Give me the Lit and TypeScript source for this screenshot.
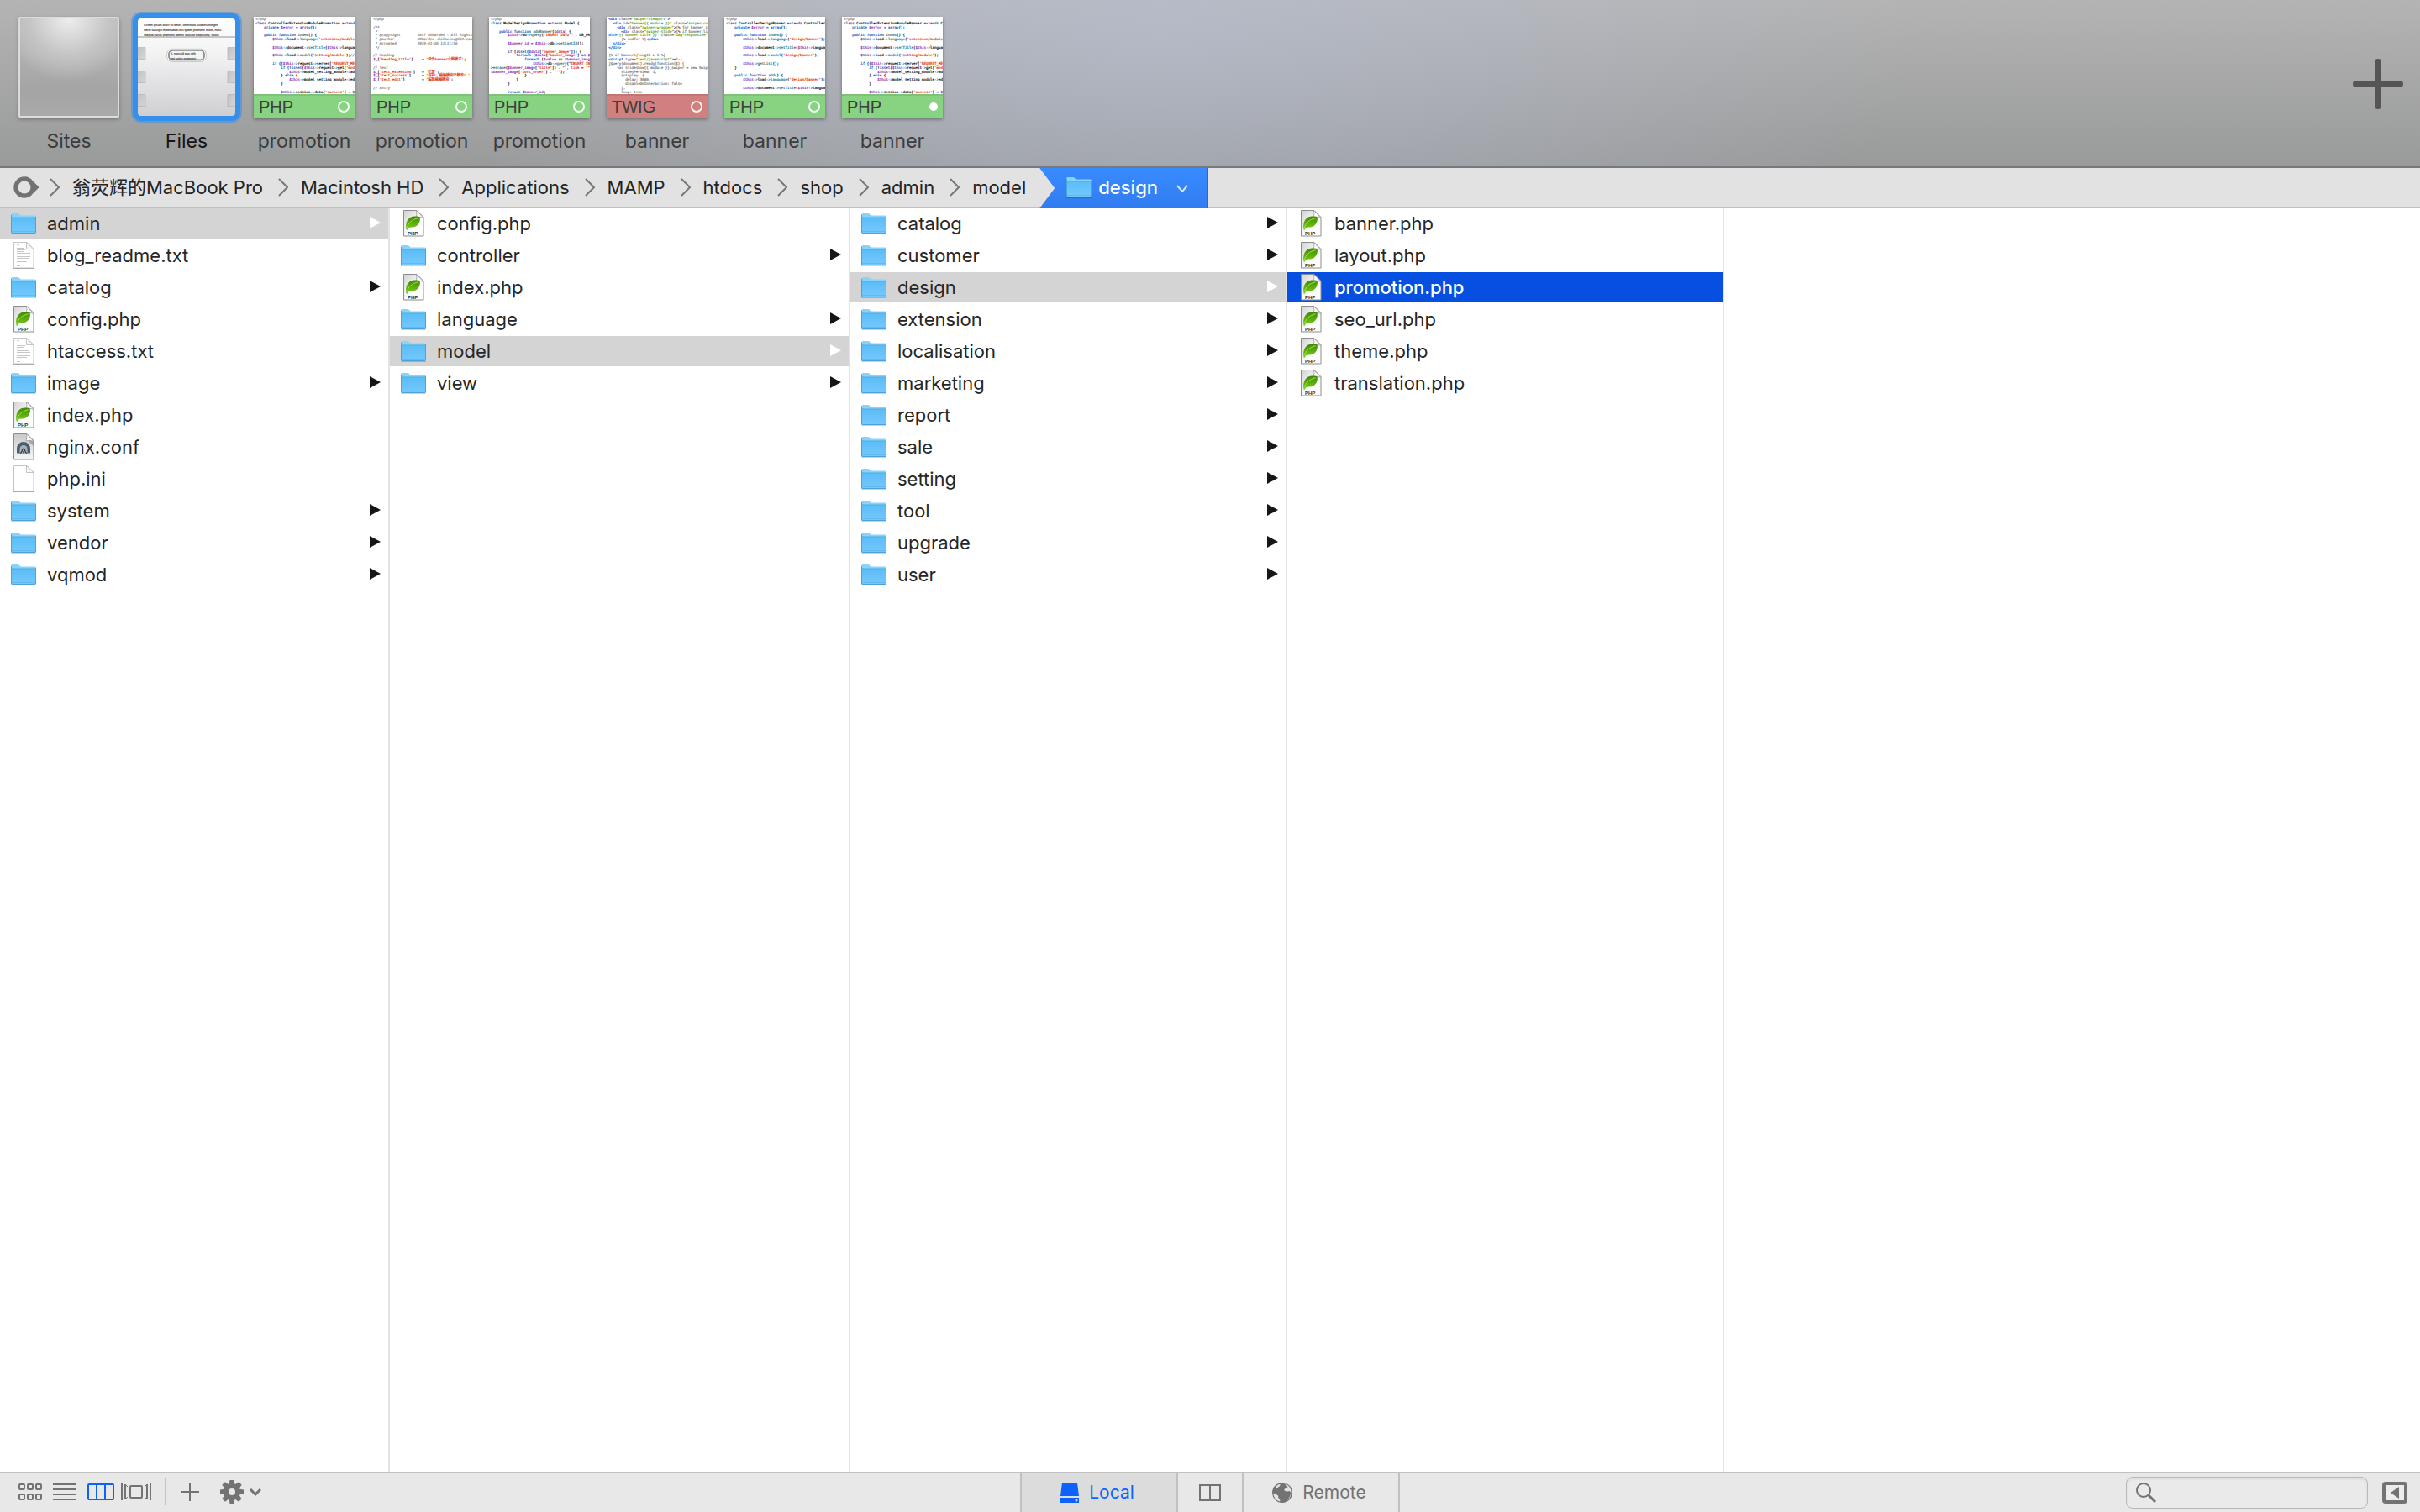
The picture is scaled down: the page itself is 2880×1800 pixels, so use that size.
import { LitElement, html, svg, css, nothing } from "lit";
import { customElement, property, state } from "lit/decorators.js";
import { classMap } from "lit/directives/class-map.js";

type Kind = "folder" | "php" | "txt" | "conf" | "blank";
interface Entry { name: string; kind: Kind; }
interface Pane { entries: Entry[]; open?: string; selected?: string; }
interface DocTab { title: string; lang: string; code: string; saved: boolean; }

const kindOf = (name: string): Kind =>
  name.endsWith(".php") ? "php"
  : name.endsWith(".txt") ? "txt"
  : name.endsWith(".conf") ? "conf"
  : name.endsWith(".ini") ? "blank"
  : "folder";

const list = (names: string): Entry[] =>
  names.split(" ").map((name) => ({ name, kind: kindOf(name) }));

const PANES: Pane[] = [
  { entries: list("admin blog_readme.txt catalog config.php htaccess.txt image index.php nginx.conf php.ini system vendor vqmod"), open: "admin" },
  { entries: list("config.php controller index.php language model view"), open: "model" },
  { entries: list("catalog customer design extension localisation marketing report sale setting tool upgrade user"), open: "design" },
  { entries: list("banner.php layout.php promotion.php seo_url.php theme.php translation.php"), selected: "promotion.php" },
];

const CRUMBS = ["翁荧辉的MacBook Pro", "Macintosh HD", "Applications", "MAMP", "htdocs", "shop", "admin", "model"];

const TABS: DocTab[] = [
  {
    title: "promotion", lang: "PHP", saved: false,
    code: `<?php
class ControllerExtensionModulePromotion extends
    private $error = array();

    public function index() {
        $this->load->language('extension/module/

        $this->document->setTitle($this->languag

        $this->load->model('setting/module');//t

        if (($this->request->server['REQUEST_MET
            if (!isset($this->request->get['modu
                $this->model_setting_module->add
            } else {
                $this->model_setting_module->edi
            }

            $this->session->data['success'] = $t`,
  },
  {
    title: "promotion", lang: "PHP", saved: false,
    code: `<?php

/**
 *
 * @copyright        2017 UXGarden - All Rights
 * @author           UXGarden <lolozine@163.com
 * @created          2019-01-26 11:11:56
 */

// Heading
$_['heading_title']    = '组合banner六图模式';

// Text
$_['text_extension']   = '扩展';
$_['text_success']     = '成功: 横幅模块已修改! ';
$_['text_edit']        = '编辑横幅模块';

// Entry`,
  },
  {
    title: "promotion", lang: "PHP", saved: false,
    code: `<?php
class ModelDesignPromotion extends Model {

    public function addBanner($data) {
        $this->db->query("INSERT INTO " . DB_PRE

        $banner_id = $this->db->getLastId();

        if (isset($data['banner_image'])) {
            foreach ($data['banner_image'] as $l
                foreach ($value as $banner_image
                    $this->db->query("INSERT INT
>escape($banner_image['title']) . "', link = '"
$banner_image['sort_order'] . "'");
                }
            }
        }

        return $banner_id;`,
  },
  {
    title: "banner", lang: "TWIG", saved: false,
    code: `<div class="swiper-viewport">
  <div id="banner{{ module }}" class="swiper-co
    <div class="swiper-wrapper">{% for banner i
      <div class="swiper-slide">{% if banner.li
alt="{{ banner.title }}" class="img-responsive"
      {% endfor %}</div>
  </div>
</div>

{% if banners|length > 1 %}
<script type="text/javascript"><!--
jQuery(document).ready(function($) {
    var slideshow{{ module }}_swiper = new Swip
      slidesPerView: 1,
      autoplay: {
        delay: 3000,
        disableOnInteraction: false
      },
      loop: true`,
  },
  {
    title: "banner", lang: "PHP", saved: false,
    code: `<?php
class ControllerDesignBanner extends Controller
    private $error = array();

    public function index() {
        $this->load->language('design/banner');

        $this->document->setTitle($this->languag

        $this->load->model('design/banner');

        $this->getList();
    }

    public function add() {
        $this->load->language('design/banner');

        $this->document->setTitle($this->languag`,
  },
  {
    title: "banner", lang: "PHP", saved: true,
    code: `<?php
class ControllerExtensionModuleBanner extends Co
    private $error = array();

    public function index() {
        $this->load->language('extension/module/

        $this->document->setTitle($this->languag

        $this->load->model('setting/module');

        if (($this->request->server['REQUEST_MET
            if (!isset($this->request->get['modu
                $this->model_setting_module->add
            } else {
                $this->model_setting_module->edi
            }

            $this->session->data['success'] = $t`,
  },
];

/* Each capture group of a pattern names the class its matches are drawn with. */
const PHP_RULES = /(<\?php|^\/\*.*|^ \*.*|\/\/.*)|('[^']*'?|"[^"]*"?)|(\$\w+)|(->|=)|\b(class|private|public|function|extends|array|isset|if|else|foreach|as|return)\b|((?:language|setTitle|model|getList|index|add|addBanner|query|getLastId|escape)(?=\())/g;
const PHP_NAMES = ["cm", "st", "va", "op", "kw", "fn"];
const TWIG_RULES = /(".*?(?:"|$))|(<\/?\w+|>)|(class=|id=|type=|alt=)|([^<">]+)/g;
const TWIG_NAMES = ["gr", "kw", "op", "mu"];

function highlight(line: string, lang: string) {
  const rules = lang === "PHP" ? PHP_RULES : TWIG_RULES;
  const names = lang === "PHP" ? PHP_NAMES : TWIG_NAMES;
  const parts: unknown[] = [];
  let at = 0;
  for (const m of line.matchAll(rules)) {
    if (m.index! > at) parts.push(svg`<tspan>${line.slice(at, m.index)}</tspan>`);
    const group = m.slice(1).findIndex((g) => g !== undefined);
    parts.push(svg`<tspan class=${names[group]}>${m[0]}</tspan>`);
    at = m.index! + m[0].length;
  }
  if (at < line.length) parts.push(svg`<tspan>${line.slice(at)}</tspan>`);
  return parts;
}

const folderIcon = html`<svg class="icon" viewBox="0 0 30 36" aria-hidden="true">
  <defs><linearGradient id="fb" x1="0" y1="0" x2="0" y2="1"><stop offset="0" stop-color="#5dbcf5"/><stop offset="1" stop-color="#72caff"/></linearGradient></defs>
  <path d="M0 30.500h30" stroke="#000" stroke-opacity=".18" stroke-width="1"/>
  <path d="M0 8q0-2 2-2h6q1 0 1.800.8l1.200 1.200q.8.600 1.800.600H28.500q1.500 0 1.500 1.500V28q0 2-1.500 2h-27Q0 30 0 28z" fill="#86d4fb"/>
  <path d="M0 11h30v17q0 2-1.500 2h-27Q0 30 0 28z" fill="url(#fb)"/>
  <path d="M0 11h30" stroke="#52abe0" stroke-width="1"/>
  <path d="M.5 8v20q0 1.500 1.500 1.500h26q1.500 0 1.500-1.500V10" fill="none" stroke="#4aa2d8" stroke-width="1"/>
  <path d="M1 27.500h28" stroke="#5fb4e8" stroke-width="1" opacity=".7"/>
</svg>`;

const pageShape = "M3.500 2.500h15.500l8 8V33H3.500z";
const fold = svg`<path d="M18.500 2.500q1 5-.5 8.500 4-1.500 8.800.2z" fill="#fff" stroke="#999" stroke-width=".8"/>`;

const phpIcon = html`<svg class="icon" viewBox="0 0 30 36" aria-hidden="true">
  <defs>
    <linearGradient id="pg" x1="0" y1="0" x2="1" y2="1"><stop offset="0" stop-color="#d2d2d2"/><stop offset=".55" stop-color="#fbfbfb"/><stop offset="1" stop-color="#fff"/></linearGradient>
    <linearGradient id="lf" x1="0" y1="0" x2="0" y2="1"><stop offset="0" stop-color="#3f8a06"/><stop offset=".5" stop-color="#5cab10"/><stop offset="1" stop-color="#7fd01c"/></linearGradient>
  </defs>
  <path d=${pageShape} fill="url(#pg)" stroke="#8d8d8d"/>
  ${fold}
  <path d="M6.500 25.500C5 18 8 10 16 9.600c3 0 5-.4 6.600.6 1 5-1 10.500-7 12-3 .6-5-.2-6.800 1.200-.6.600-.6 1.500-.8 2.400z" fill="url(#lf)"/>
  <path d="M7.500 23C9 17.500 13 13.500 20.500 11.800" fill="none" stroke="#a2e83c" stroke-width="1"/>
  <text class="mark" x="8" y="32">PHP</text>
</svg>`;

const txtIcon = html`<svg class="icon" viewBox="0 0 30 36" aria-hidden="true">
  <path d=${pageShape} fill="#fff" stroke="#c4c4c4"/>
  <path d="M3 33.500h24" stroke="#aaa" stroke-width="1"/>
  <path d="M18.500 2.500v8h8.500z" fill="#f4f4f4" stroke="#bbb" stroke-width=".8"/>
  <path d="M7 5.500h3M7 9.500h9M7 11.500h10M7 13.500h8M7 15.500h16M7 17.500h15M7 19.500h16M7 21.500h14M7 23.500h16M7 25.500h12M7 30.500h4" stroke="#c6c6c6" stroke-width="1"/>
</svg>`;

const blankIcon = html`<svg class="icon" viewBox="0 0 30 36" aria-hidden="true">
  <path d=${pageShape} fill="#fff" stroke="#c4c4c4"/>
  <path d="M3 33.500h24" stroke="#aaa" stroke-width="1"/>
  <path d="M18.500 2.500v8h8.500z" fill="#f8f8f8" stroke="#b5b5b5" stroke-width=".8"/>
</svg>`;

const confIcon = html`<svg class="icon" viewBox="0 0 30 36" aria-hidden="true">
  <defs><linearGradient id="cg" x1="0" y1="0" x2="0" y2="1"><stop offset="0" stop-color="#c9c9c9"/><stop offset="1" stop-color="#f6f6f6"/></linearGradient></defs>
  <path d=${pageShape} fill="url(#cg)" stroke="#8d8d8d"/>
  <path d="M27 11v6l-8-7z" fill="#777" opacity=".5"/>
  ${fold}
  <path d="M7 25.500V20a8 8 0 0 1 16 0v5.500z" fill="#4c5c6e"/>
  <path d="M10.500 25.500V20.500a4.500 4.500 0 0 1 9 0v5z" fill="#a9b0b8"/>
  <path d="M11 25.500q2-.5 2.500-4 .5-1.500 1.500-1.500t1.500 1.500q.5 3.500 2.500 4M15 25.500v-2.500" fill="none" stroke="#2d3a48" stroke-width="1.200"/>
</svg>`;

const ICONS = { folder: folderIcon, php: phpIcon, txt: txtIcon, blank: blankIcon, conf: confIcon };

const base = css`
  :host, *, *::before, *::after { box-sizing: border-box; }
  button, input { font: inherit; color: inherit; margin: 0; padding: 0; border: 0; background: none; text-align: inherit; }
  button { cursor: default; }
  svg { display: block; flex: none; }
`;

@customElement("doc-thumb")
export class DocThumb extends LitElement {
  @property({ attribute: false }) doc!: DocTab;

  static styles = [base, css`
    :host { display: flex; flex-direction: column; height: 120px; background: #fff; box-shadow: 0 2px 4px rgba(0, 0, 0, .4); }
    .code { width: 120px; height: 92px; }
    text { font: 13px "DejaVu Sans Mono", "Noto Sans CJK SC", monospace; white-space: pre; }
    text, tspan { fill: currentColor; stroke: currentColor; stroke-width: .6px; color: #111; }
    .cm { color: #888; font-style: italic; }
    .st { color: #e0330c; }
    .va { color: #8a2fb0; }
    .op { color: #1483ea; }
    .kw { color: #1650b8; }
    .fn { color: #38737c; }
    .gr { color: #6ca01a; }
    .mu { color: #777; }
    .bar { display: flex; align-items: center; justify-content: space-between; height: 28px; padding: 0 6px; border-top: 2px solid #7ec277; background: #88d382; color: #3c403c; font: 20px/26px "Liberation Sans", Arial, sans-serif; }
    .twig { border-color: #c47474; background: #d27f7f; }
    .dot { width: 14px; height: 14px; }
  `];

  render() {
    const { code, lang, saved } = this.doc;
    return html`
      <svg class="code" viewBox="0 0 374 287" aria-hidden="true">
        ${code.split("\n").map((line, i) => svg`<text x="7" y=${13 + i * 15}>${highlight(line, lang)}</text>`)}
      </svg>
      <div class=${classMap({ bar: true, twig: lang === "TWIG" })}>
        <span>${lang}</span>
        <svg class="dot" viewBox="0 0 14 14" aria-hidden="true">
          ${saved
            ? svg`<circle cx="9" cy="7" r="5" fill="#fff"/>`
            : svg`<circle cx="7" cy="7" r="6" fill="none" stroke="#fff" stroke-opacity=".9" stroke-width="2"/>`}
        </svg>
      </div>`;
  }
}

@customElement("tab-strip")
export class TabStrip extends LitElement {
  static styles = [base, css`
    :host {
      display: flex; justify-content: space-between; align-items: flex-start;
      height: 200px; padding: 20px 20px 0 12px; border-bottom: 2px solid #77787b;
      background:
        radial-gradient(ellipse 900px 420px at 1380px 40px, rgba(185, 195, 220, .5), rgba(185, 195, 220, 0)),
        linear-gradient(#b4b4b4, #999a9a);
    }
    .tabs { display: flex; }
    .tab { display: flex; flex-direction: column; gap: 14px; width: 140px; padding: 0 10px; text-align: center; font-size: 23px; line-height: 28px; color: #3c3c3d; }
    .active { color: #161616; }
    .sites { height: 120px; border: 2px solid #dcdcdc; border-radius: 2px; background: radial-gradient(ellipse 80px 74px at 50% 0, #eee, #c4c4c4 60%, rgba(190, 190, 190, 0)), linear-gradient(#bbb, #a4a4a4 75%, #aaa); box-shadow: 0 2px 4px rgba(0, 0, 0, .3); }
    .files { height: 128px; margin: -4px; border: 6px solid #368fea; border-radius: 10px; background: #368fea; box-shadow: 0 0 0 2px rgba(70, 145, 230, .6); }
    .files svg { width: 116px; height: 116px; border-radius: 4px; }
    .files text { font: 11px "Liberation Sans", sans-serif; fill: #444; stroke: #444; stroke-width: .4px; }
    .add { width: 60px; height: 60px; margin-top: 50px; }
  `];

  private filesThumb() {
    return html`<svg viewBox="0 0 348 348" aria-hidden="true">
      <defs>
        <linearGradient id="fg" x1="0" y1="0" x2="0" y2="1"><stop offset="0" stop-color="#fff"/><stop offset=".35" stop-color="#f3f3f4"/><stop offset="1" stop-color="#cfcfd2"/></linearGradient>
        <linearGradient id="ng" x1="0" y1="0" x2="1" y2="1"><stop offset="0" stop-color="#c2c2c4"/><stop offset="1" stop-color="#d6d6d8"/></linearGradient>
      </defs>
      <path d="M0 0h348v348H0z" fill="url(#fg)"/>
      <text x="22" y="28">Lorem ipsum dolor sit amet, venenatis sodales integer,</text>
      <text x="22" y="45">amet suscipit malesuada orci quam praesent tellus, nunc</text>
      <text x="22" y="62">magna purus praesent fames suscipit adipiscing, facilis</text>
      <path d="M0 66h348" stroke="#b5b5b5" stroke-width="4"/>
      ${[104, 188, 272].map((y) => svg`
        <rect x="-2" y=${y} width="29" height="42" fill="url(#ng)" stroke="#b2b2b5" stroke-width="2"/>
        <rect x="321" y=${y} width="29" height="42" fill="url(#ng)" stroke="#b2b2b5" stroke-width="2"/>`)}
      <rect x="104" y="109" width="140" height="45" rx="18" fill="#fff" stroke="#aaa" stroke-width="2"/>
      <rect x="111" y="114" width="126" height="34" rx="13" fill="#f4f4f4" stroke="#858585" stroke-width="5"/>
      <text x="120" y="130">t, nunc id quo veh</text>
      <text x="120" y="146">mi tortor praesent,</text>
    </svg>`;
  }

  render() {
    return html`
      <nav class="tabs" aria-label="Open documents">
        <button class="tab"><span class="sites"></span><span>Sites</span></button>
        <button class="tab active" aria-current="page"><span class="files">${this.filesThumb()}</span><span>Files</span></button>
        ${TABS.map((t) => html`<button class="tab"><doc-thumb .doc=${t}></doc-thumb><span>${t.title}</span></button>`)}
      </nav>
      <button class="add" aria-label="New tab">
        <svg width="60" height="60" viewBox="0 0 60 60"><path d="M4 30h52M30 4v52" stroke="#555" stroke-width="8" stroke-linecap="round"/></svg>
      </button>`;
  }
}

@customElement("path-bar")
export class PathBar extends LitElement {
  static styles = [base, css`
    :host { display: block; height: 48px; background: #e2e2e2; box-shadow: inset 0 -2px #c0c0c0; }
    .path { display: flex; height: 100%; padding-left: 16px; color: #232323; line-height: 46px; }
    a { display: block; color: inherit; text-decoration: none; white-space: nowrap; }
    .home { width: 31px; margin: 10px 0; }
    .sep { width: 12px; height: 22px; margin: 12px 15px 0 18px; }
    .home + .sep { margin-left: 12px; }
    .current { display: flex; margin-left: 16px; padding: 0 22px 0 32px; border-right: 2px solid #2569d4; background: linear-gradient(#388bff, #307cf0); color: #fff; font-weight: 500; clip-path: polygon(0 0, 100% 0, 100% 100%, 0 100%, 18px 50%); }
    .icon { width: 30px; height: 36px; margin: 5px 8px 0 0; }
    .drop { width: 14px; height: 9px; margin: 20px 0 0 22px; }
  `];

  render() {
    const sep = html`<svg class="sep" viewBox="0 0 12 22" aria-hidden="true"><path d="M1 1l10 10L1 21" fill="none" stroke="#777" stroke-width="2"/></svg>`;
    return html`<nav class="path" aria-label="Path">
      <a class="home" href="#" aria-label="Root">
        <svg width="31" height="26" viewBox="0 0 31 26"><path fill-rule="evenodd" fill="#727272" d="M13 .3c4.500 0 8 2 10 5.200L30.700 13 23 20.500c-2 3.200-5.500 5.200-10 5.200A12.700 12.700 0 0 1 13 .3zM13 5.500a7.500 7.500 0 1 0 0 15 7.500 7.500 0 0 0 0-15z"/></svg>
      </a>
      ${CRUMBS.map((c) => html`${sep}<a href="#">${c}</a>`)}
      <a class="current" href="#" aria-current="location">${folderIcon}design
        <svg class="drop" viewBox="0 0 14 9" aria-hidden="true"><path d="M1 1l6 7 6-7" fill="none" stroke="#d5e6ff" stroke-width="2"/></svg>
      </a>
    </nav>`;
  }
}

@customElement("file-pane")
export class FilePane extends LitElement {
  @property({ attribute: false }) pane!: Pane;

  static styles = [base, css`
    :host { display: block; border-right: 2px solid #e3e3e3; }
    .rows { display: flex; flex-direction: column; gap: 2px; margin: 0; padding: 0; list-style: none; }
    .row { display: flex; align-items: center; width: 100%; height: 36px; padding: 0 9px 0 13px; color: #262626; }
    .open { background: #d4d4d4; }
    .selected { background: #064fe0; color: #fff; font-weight: 500; }
    .icon { width: 30px; height: 36px; }
    .mark { font: bold 6px "Liberation Sans", sans-serif; fill: #333; }
    .name { flex: 1; margin-left: 13px; line-height: 36px; }
    .arrow { width: 13px; height: 14px; margin-bottom: 2px; fill: #161616; }
    .open .arrow { fill: #fff; }
  `];

  render() {
    const { entries, open, selected } = this.pane;
    return html`<ul class="rows">${entries.map((e) => html`<li>
      <button class=${classMap({ row: true, open: e.name === open, selected: e.name === selected })}>
        ${ICONS[e.kind]}<span class="name">${e.name}</span>
        ${e.kind === "folder" ? html`<svg class="arrow" viewBox="0 0 13 14" aria-hidden="true"><path d="M0 0l13 7-13 7z"/></svg>` : nothing}
      </button></li>`)}</ul>`;
  }
}

@customElement("status-bar")
export class StatusBar extends LitElement {
  @state() private side = "local";

  static styles = [base, css`
    :host { display: grid; grid-template-columns: 1fr auto 1fr; height: 48px; border-top: 2px solid #c1c1c1; background: #e8e8e8; color: #737373; }
    .tools, .find { display: flex; align-items: center; }
    .tools { padding: 0 0 2px 22px; }
    .views { display: flex; align-items: center; gap: 13px; }
    .narrow { margin-left: -5px; }
    .rule { width: 2px; height: 32px; margin: 0 17px 0 16px; background: #c3c3c3; }
    .action { margin-left: 25px; }
    .sides { display: flex; border-left: 2px solid #c1c1c1; }
    .side { display: flex; align-items: center; justify-content: center; gap: 12px; width: 186px; padding-right: 4px; border-right: 2px solid #c1c1c1; font-size: 21px; line-height: 46px; }
    .both { width: 78px; padding: 0; }
    .on { background: #dcdcdc; color: #0d62fe; }
    .find { justify-content: flex-end; gap: 17px; padding-right: 15px; }
    .field { display: flex; align-items: center; gap: 10px; width: 288px; height: 38px; padding: 0 10px; border: 1px solid #b9b9b9; border-radius: 8px; background: #eaeaea; box-shadow: inset 0 2px 3px rgba(0, 0, 0, .08); }
    .query { flex: 1; min-width: 0; outline: 0; }
  `];

  render() {
    return html`
      <div class="tools">
        <div class="views">
          <button aria-label="Icon view"><svg width="28" height="20" viewBox="0 0 28 20" fill="none" stroke="#737373" stroke-width="2">
            ${[1, 11, 21].map((x) => [1, 13].map((y) => svg`<rect x=${x} y=${y} width="6" height="6" rx="1"/>`))}</svg></button>
          <button aria-label="List view"><svg width="28" height="20" viewBox="0 0 28 20" stroke="#737373" stroke-width="2"><path d="M0 1h28M0 7h28M0 13h28M0 19h28"/></svg></button>
          <button aria-label="Column view" aria-pressed="true"><svg width="32" height="20" viewBox="0 0 32 20" fill="none" stroke="#0d62fe" stroke-width="2"><rect x="1" y="1" width="30" height="18" rx="1"/><path d="M11 1v18M21 1v18"/></svg></button>
          <button class="narrow" aria-label="Cover view"><svg width="36" height="20" viewBox="0 0 36 20" fill="none" stroke="#737373" stroke-width="2"><path d="M1 0v20M35 0v20"/><path d="M5 1v18M31 1v18" /><path d="M5 1l3 3M5 19l3-3M31 1l-3 3M31 19l-3-3" stroke-width="1"/><rect x="11" y="3" width="14" height="14" rx="1"/></svg></button>
        </div>
        <span class="rule"></span>
        <button aria-label="New item"><svg width="22" height="22" viewBox="0 0 22 22"><path d="M0 11h22M11 0v22" stroke="#737373" stroke-width="2"/></svg></button>
        <button class="action" aria-label="Actions"><svg width="49" height="28" viewBox="0 0 49 28">
          <g fill="#737373">${[0, 45, 90, 135].map((a) => svg`<path d="M11.500 0h5l1 6v16l-1 6h-5l-1-6V6z" transform="rotate(${a} 14 14)"/>`)}</g>
          <circle cx="14" cy="14" r="10" fill="#737373"/><circle cx="14" cy="14" r="4" fill="#e8e8e8"/>
          <path d="M36 11l6 6 6-6" fill="none" stroke="#737373" stroke-width="3"/></svg></button>
      </div>
      <div class="sides">
        <button class=${classMap({ side: true, on: this.side === "local" })} @click=${() => (this.side = "local")}>
          <svg width="22" height="24" viewBox="0 0 22 24"><path fill="currentColor" d="M2 0h18l2 16H0z"/><path fill="currentColor" d="M0 18h22v6H0z"/><circle cx="19" cy="21" r="1.500" fill="#dcdcdc"/></svg>Local</button>
        <button class=${classMap({ side: true, both: true, on: this.side === "both" })} aria-label="Show both" @click=${() => (this.side = "both")}>
          <svg width="26" height="20" viewBox="0 0 26 20" fill="none" stroke="currentColor" stroke-width="2"><path d="M1 1h24v18H1zM13 1v18"/></svg></button>
        <button class=${classMap({ side: true, on: this.side === "remote" })} @click=${() => (this.side = "remote")}>
          <svg width="24" height="24" viewBox="0 0 24 24"><circle cx="12" cy="12" r="12" fill="#737373"/>
            <path d="M1.500 12.500l3.500 1.500 2 1.500.5 3 2 2.500-.5 1.500A11 11 0 0 1 1.300 13zM14.500 1.500L17 3l1.500 2.500-3 1.500-1.500 2 3 1.500 3.500-.5 2 2a11 11 0 0 0-8-11zM22.500 12.500l-1.500 4-3 4.500a11 11 0 0 0 4.500-8.500z" fill="#e4e4e4"/>
            <path d="M5 4l3-2 2 .5-2 2.500-3 1.500z" fill="#e4e4e4"/></svg>Remote</button>
      </div>
      <div class="find">
        <label class="field">
          <svg width="26" height="26" viewBox="0 0 26 26" fill="none" stroke="#737373"><circle cx="10" cy="10" r="8" stroke-width="2"/><path d="M15.500 15.500l8.500 8.500" stroke-width="3"/></svg>
          <input class="query" type="text" aria-label="Search files">
        </label>
        <button aria-label="Toggle sidebar"><svg width="30" height="26" viewBox="0 0 30 26"><rect x="2" y="2" width="26" height="22" rx="2" fill="#ececec" stroke="#737373" stroke-width="4"/><path d="M20 6v14L10 13z" fill="#737373"/></svg></button>
      </div>`;
  }
}

@customElement("app-root")
export class AppRoot extends LitElement {
  static styles = css`
    :host { display: flex; flex-direction: column; min-height: 100vh; background: #fff; font: 22px/28px Inter, "Noto Sans CJK SC", sans-serif; color: #262626; }
    .panes { flex: 1; display: grid; grid-template-columns: 464px 548px 520px 520px 1fr; }
  `;

  render() {
    return html`
      <tab-strip></tab-strip>
      <path-bar></path-bar>
      <main class="panes">${PANES.map((p) => html`<file-pane .pane=${p}></file-pane>`)}</main>
      <status-bar></status-bar>`;
  }
}
